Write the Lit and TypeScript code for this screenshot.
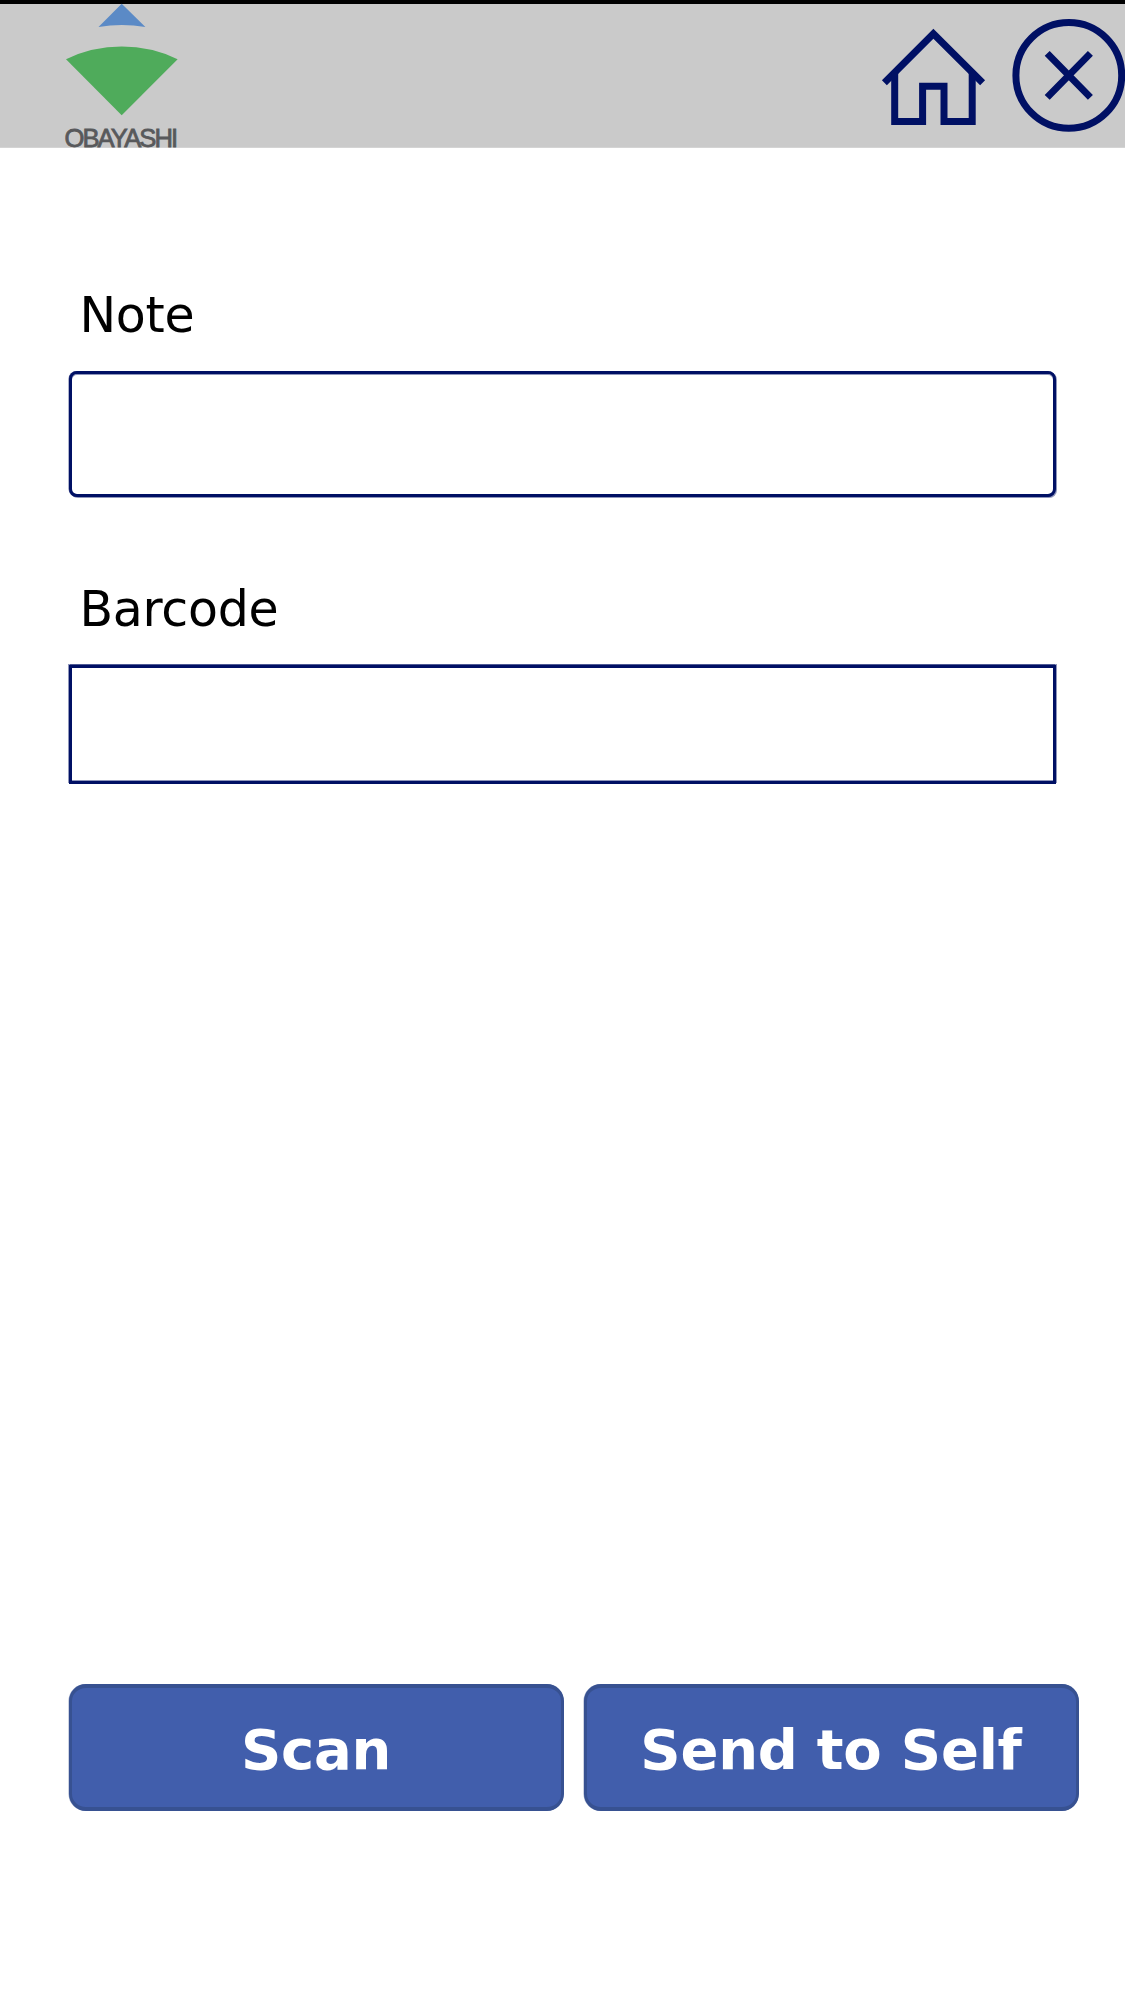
import { LitElement, html, css } from "lit";
import { customElement, property } from "lit/decorators.js";

@customElement("app-header")
class AppHeader extends LitElement {
  static styles = css`
    :host {
      display: block;
    }
    .bar {
      box-sizing: border-box;
      height: 148px;
      border-top: 4px solid #000;
      border-bottom: 1px solid #d4d4d4;
      background: #cacaca;
      display: flex;
      justify-content: space-between;
      padding-left: 60px;
    }
    .logo,
    .actions svg {
      display: block;
    }
    .logo {
      overflow: visible;
    }
    .brand {
      font-family: "Liberation Sans", Arial, sans-serif;
      font-size: 25.6px;
      letter-spacing: -2.6px;
      fill: #58595b;
      stroke: #58595b;
      stroke-width: 0.8px;
    }
    .actions {
      display: flex;
    }
    .action {
      border: 0;
      padding: 0;
      background: none;
    }
    .line {
      fill: none;
      stroke: #001064;
      stroke-width: 7;
    }
  `;

  render() {
    return html`
      <header class="bar">
        <svg class="logo" width="124" height="144" viewBox="60 4 124 144">
          <path fill="#5b8ac6" d="M121.7 3.8L145.4 27Q121.7 23.2 98.5 27Z" />
          <path fill="#4fab5b" d="M66 59.2A130 130 0 0 1 177.6 59.2L121.7 115.2Z" />
          <text class="brand" x="64.4" y="146.6" textLength="111.2">OBAYASHI</text>
        </svg>
        <div class="actions">
          <button class="action" aria-label="Home">
            <svg width="130" height="143" viewBox="870 4 130 143">
              <path class="line" d="M884.4 82.7L933.4 33.7L982.6 82.7" />
              <path class="line" d="M894.7 72V121.5H922.6V86.3H944V121.5H972.2V72" />
            </svg>
          </button>
          <button class="action" aria-label="Close">
            <svg width="125" height="143" viewBox="1000 4 125 143">
              <circle class="line" cx="1068.8" cy="75.4" r="52.9" />
              <path class="line" d="M1047.2 53.4L1090.4 97.4M1090.4 53.4L1047.2 97.4" />
            </svg>
          </button>
        </div>
      </header>
    `;
  }
}

@customElement("labeled-field")
class LabeledField extends LitElement {
  @property() label = "";
  @property() variant = "rounded";

  static styles = css`
    :host {
      display: block;
    }
    .label {
      display: block;
      height: 63px;
      line-height: 63px;
      padding-left: 10.5px;
      margin-bottom: 24px;
      font-family: Verdana, "DejaVu Sans", sans-serif;
      font-size: 49px;
      letter-spacing: -0.3px;
      color: #000;
    }
    .input {
      display: block;
      box-sizing: border-box;
      width: 987px;
      border: 3px solid #001064;
      background: #fff;
      padding: 0 12px;
      font: 48px "DejaVu Sans", sans-serif;
      outline: none;
    }
    .rounded {
      height: 126px;
      border-radius: 8px;
      box-shadow: -0.5px 0 0 #001064a0, 1px 1px 0 #00106470, inset 0 1px 0 #00106470;
    }
    .square {
      height: 119px;
      border-radius: 0;
      box-shadow: -1px -1px 0 #00106470, 1px -1px 0 #00106470, inset 0 -1px 0 #00106470;
    }
  `;

  render() {
    return html`
      <label class="label" for="field">${this.label}</label>
      <input id="field" class="input ${this.variant}" />
    `;
  }
}

@customElement("app-root")
class AppRoot extends LitElement {
  static styles = css`
    :host {
      display: block;
    }
    .page {
      box-sizing: border-box;
      height: 1994px;
      background: #fff;
      display: flex;
      flex-direction: column;
    }
    .form {
      flex: 1;
      padding: 136px 0 0 69px;
      display: flex;
      flex-direction: column;
      gap: 81px;
    }
    .buttons {
      display: flex;
      gap: 20px;
      padding: 0 0 183px 69px;
    }
    .button {
      box-sizing: border-box;
      width: 495px;
      height: 127px;
      border: 3px solid #375191;
      border-top-width: 4px;
      border-bottom-width: 4px;
      border-radius: 17px;
      box-shadow: -0.5px 0 0 #37519180;
      background: #415eac;
      color: #fff;
      padding: 5px 1px 0 0;
      font: bold 56px/1 "DejaVu Sans", Verdana, sans-serif;
      letter-spacing: -0.25px;
    }
  `;

  render() {
    return html`
      <div class="page">
        <app-header></app-header>
        <main class="form">
          <labeled-field label="Note" variant="rounded"></labeled-field>
          <labeled-field label="Barcode" variant="square"></labeled-field>
        </main>
        <footer class="buttons">
          <button class="button">Scan</button>
          <button class="button">Send to Self</button>
        </footer>
      </div>
    `;
  }
}
